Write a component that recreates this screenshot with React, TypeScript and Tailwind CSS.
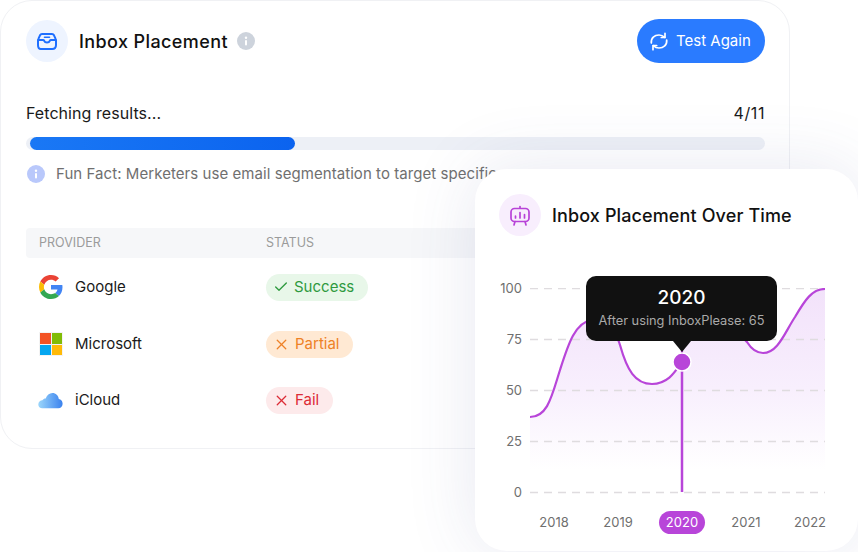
import { Check, X } from "lucide-react";

const providers = [
  { name: "Google", logo: <GoogleLogo />, status: "Success" },
  { name: "Microsoft", logo: <MicrosoftLogo />, status: "Partial" },
  { name: "iCloud", logo: <CloudLogo />, status: "Fail" },
];

const pillStyles: Record<string, string> = {
  Success: "gap-[6px] bg-[#e8f7e9] text-[#2f9a3f]",
  Partial: "gap-[7px] bg-[#ffe9d3] text-[#ee8126]",
  Fail: "gap-[7px] bg-[#fdeaeb] text-[#dc2b36]",
};

const yTicks = ["100", "75", "50", "25", "0"];
const years = ["2018", "2019", "2020", "2021", "2022"];

// the line jumps up behind the marker and the tooltip arrow, as in the design
const CURVE =
  "M1 129 C19 129 23 107 31 82 C39 57 46 34 63 32 C83 30 86 42 91 57 C98 82 106 96 123 96 C139 96 146 84 153 74 L153 32 C171 32 201 32 218 54 C223 62 228 65 234 65 C249 65 256 44 266 29 C276 12 283 1 296 1";

function GoogleLogo() {
  return (
    <svg viewBox="0 0 48 48" className="w-6 h-6">
      <path fill="#EA4335" d="M24 9.5c3.54 0 6.71 1.22 9.21 3.6l6.85-6.85C35.9 2.38 30.47 0 24 0 14.62 0 6.51 5.38 2.56 13.22l7.98 6.19C12.43 13.72 17.74 9.5 24 9.5z" />
      <path fill="#4285F4" d="M46.98 24.55c0-1.57-.15-3.09-.38-4.55H24v9.02h12.94c-.58 2.96-2.26 5.48-4.78 7.18l7.73 6c4.51-4.18 7.09-10.36 7.09-17.65z" />
      <path fill="#FBBC05" d="M10.53 28.59c-.48-1.45-.76-2.99-.76-4.59s.27-3.14.76-4.59l-7.98-6.19C.92 16.46 0 20.12 0 24c0 3.88.92 7.54 2.56 10.78l7.97-6.19z" />
      <path fill="#34A853" d="M24 48c6.48 0 11.93-2.13 15.89-5.81l-7.73-6c-2.15 1.45-4.92 2.3-8.16 2.3-6.26 0-11.57-4.22-13.47-9.91l-7.98 6.19C6.51 42.62 14.62 48 24 48z" />
    </svg>
  );
}

function MicrosoftLogo() {
  return (
    <div className="grid grid-cols-2 gap-[1px] w-6 h-6 p-[1px] bg-[#f3f3f3]">
      <div className="bg-[#f35325]" />
      <div className="bg-[#81bc06]" />
      <div className="bg-[#05a6f0]" />
      <div className="bg-[#ffba08]" />
    </div>
  );
}

function CloudLogo() {
  return (
    <svg viewBox="0 0 26 17" className="w-[26px] h-[17px] -ml-[1px]">
      <defs>
        <linearGradient id="cloud" x1="0" y1="0" x2="1" y2="0">
          <stop offset="0" stopColor="#9bd6fb" />
          <stop offset="1" stopColor="#3b82ee" />
        </linearGradient>
      </defs>
      <path
        fill="url(#cloud)"
        d="M4.500 16.500C2 16.500.3 14.800.3 12.600c0-2.500 2-4.300 4.300-4.400C5.500 6.800 6.800 6.300 8 6.400 9.200 3 11.800.8 15 .8c3.500 0 6.200 2.500 6.600 6.100 2.400.3 4 2.400 4 4.900 0 2.700-1.900 4.700-4.500 4.700H4.500z"
      />
    </svg>
  );
}

function InfoDot({ className }: { className: string }) {
  return (
    <span className={`flex items-center justify-center w-[18px] h-[18px] rounded-full text-white ${className}`}>
      <svg viewBox="0 0 18 18" className="w-[18px] h-[18px]">
        <rect x="8" y="8" width="2" height="5.500" rx="1" fill="currentColor" />
        <circle cx="9" cy="5.800" r="1.200" fill="currentColor" />
      </svg>
    </span>
  );
}

function InboxIcon() {
  return (
    <svg viewBox="0 0 20 17" className="w-5 h-[17px]" fill="none" stroke="#1f6fff" strokeWidth="2" strokeLinejoin="round" strokeLinecap="round">
      <path d="M5 1h10c1 0 1.600.5 2 1.300l1.500 3.300c.3.600.5 1.200.5 1.900V12c0 2.300-1.500 4-3.800 4H3.800C1.500 16 1 14.300 1 12V7.500c0-.7.200-1.300.5-1.900L3 2.300C3.400 1.500 4 1 5 1z" />
      <path d="M1.500 7H6c.6 0 1 .3 1.200.8.400 1 1.300 1.700 2.800 1.700s2.400-.7 2.800-1.700c.2-.5.600-.8 1.200-.8h4.500" />
      <path d="M7.500 4.200h5" strokeWidth="1.600" />
    </svg>
  );
}

function BoardIcon() {
  return (
    <svg viewBox="0 0 20 21" className="w-5 h-[21px]" fill="none" stroke="#b843d8" strokeWidth="1.700" strokeLinecap="round" strokeLinejoin="round">
      <path d="M10 1.500v1.500" />
      <rect x="1" y="3.500" width="18" height="13" rx="3.500" />
      <path d="M5.500 11v2M10 7.500V13M14.500 9.500V13" />
      <path d="M5 16.500 4 20M15 16.500l1 3.500" />
    </svg>
  );
}

function RefreshIcon() {
  return (
    <svg viewBox="0 0 18 19" className="w-[18px] h-[19px]" fill="none" stroke="currentColor" strokeWidth="1.700" strokeLinecap="round" strokeLinejoin="round">
      <path d="M1.300 11C.8 6 4.500 3 9 3c2.200 0 4 .8 5.700 2.400" />
      <path d="M15 1.300v4.200h-3.700" />
      <path d="M16.700 8c.5 5-3.200 8-7.700 8-2.200 0-4-.8-5.700-2.400" />
      <path d="M3 17.700v-4.200h3.700" />
    </svg>
  );
}

function StatusPill({ status }: { status: string }) {
  return (
    <div className={`inline-flex items-center h-[27px] pl-2 pr-[14px] rounded-full text-[15px] ${pillStyles[status]}`}>
      <span className="flex items-center justify-center w-[14px]">
        {status === "Success" ? (
          <Check className="w-4 h-4 shrink-0" strokeWidth={2} />
        ) : (
          <X className="w-[17px] h-[17px] shrink-0" strokeWidth={1.800} />
        )}
      </span>
      {status}
    </div>
  );
}

function PlacementCard() {
  return (
    <div className="w-[790px] h-[449px] rounded-[32px] border border-[#f0f1f4] bg-white pl-[25px] pr-[24px] pt-[18px] overflow-hidden">
      <div className="flex items-center justify-between">
        <div className="flex items-center">
          <div className="flex items-center justify-center w-[42px] h-[42px] rounded-full bg-[#eef4ff]">
            <InboxIcon />
          </div>
          <h2 className="ml-[11px] text-[18px] tracking-[0.4px] font-medium text-[#111]">Inbox Placement</h2>
          <InfoDot className="ml-[9px] bg-[#cdd3dc]" />
        </div>
        <button className="flex items-center gap-2 h-[44px] w-[128px] pl-[13px] rounded-full bg-[#2a7bff] text-white text-[15px]">
          <RefreshIcon />
          Test Again
        </button>
      </div>

      <div className="flex items-center justify-between mt-[38px] text-[16px] leading-6 text-[#1a1a1a]">
        <span className="tracking-[0.06px]">Fetching results...</span>
        <span className="tracking-[0.6px]">4/11</span>
      </div>
      <div className="mt-[12px] h-[13px] rounded-full bg-[#edf0f6] pl-1">
        <div className="h-[13px] w-[265px] rounded-full bg-gradient-to-r from-[#1a78f5] to-[#0b63ef]" />
      </div>
      <div className="flex items-center mt-[14px] ml-[1px] text-[15px] leading-5 text-[#6f6f6f] whitespace-nowrap">
        <InfoDot className="bg-[#b9c8fb]" />
        <span className="ml-[11px] tracking-[0.06px]">Fun Fact: Merketers use email segmentation to target specific</span>
      </div>

      <div className="flex items-center mt-[44px] h-[30px] pl-[13px] rounded bg-[#f6f7f9] text-[12.500px] text-[#9b9b9b]">
        <span className="w-[227px]">PROVIDER</span>
        <span>STATUS</span>
      </div>
      <div className="mt-[1px]">
        {providers.map((p) => (
          <div key={p.name} className="flex items-center h-[56.700px] pl-[13px]">
            <div className="flex items-center w-[227px]">
              <div className="flex items-center w-6 h-6">{p.logo}</div>
              <span className="ml-3 text-[15px] text-[#1a1a1a]">{p.name}</span>
            </div>
            <StatusPill status={p.status} />
          </div>
        ))}
      </div>
    </div>
  );
}

function TrendCard() {
  return (
    <div className="absolute left-[475px] top-[169px] w-[383px] h-[382px] rounded-[32px] bg-white pl-6 pt-[25px] shadow-[0_0_70px_rgba(70,80,150,0.13)]">
      <div className="flex items-center">
        <div className="flex items-center justify-center w-[42px] h-[42px] rounded-full bg-[#f8eefd]">
          <BoardIcon />
        </div>
        <h2 className="ml-[11px] text-[18px] tracking-[0.12px] font-medium text-[#111]">Inbox Placement Over Time</h2>
      </div>

      <div className="relative flex mt-[52px]">
        <div className="flex flex-col w-[23px] items-end -mt-[25px] text-[13px] text-[#6f6f6f]">
          {yTicks.map((t) => (
            <div key={t} className="flex items-center h-[51px] leading-none">
              {t}
            </div>
          ))}
        </div>
        <svg viewBox="0 0 296 223" className="w-[296px] h-[223px] ml-[7px]">
          <defs>
            <linearGradient id="area" x1="0" y1="0" x2="0" y2="1">
              <stop offset="0" stopColor="#f2e2fa" />
              <stop offset="0.55" stopColor="#f8effd" />
              <stop offset="1" stopColor="#ffffff" />
            </linearGradient>
          </defs>
          <path d={`${CURVE} V182 H1 Z`} fill="url(#area)" />
          {[0, 1, 2, 3, 4].map((i) => (
            <path key={i} d={`M1 ${0.5 + i * 51}H296`} stroke="#dfdcdf" strokeWidth="1.500" strokeDasharray="8 6" />
          ))}
          <path d={CURVE} fill="none" stroke="#b845d9" strokeWidth="2.200" />
          <path d="M153 74V204" stroke="#b845d9" strokeWidth="2.500" />
          <circle cx="153" cy="74" r="9" fill="#b845d9" stroke="#fff" strokeWidth="1.500" />
        </svg>

        <div className="absolute left-[87px] -top-[12px] w-[191px] h-[65px] rounded-[10px] bg-[#111] text-center pt-[9px]">
          <div className="text-[19px] leading-[26px] font-medium text-white">2020</div>
          <div className="mt-[2px] text-[12.800px] leading-4 text-[#a9a9a9]">After using InboxPlease: 65</div>
          <div className="absolute left-1/2 -translate-x-1/2 -bottom-[11px] w-0 h-0 border-x-[9px] border-x-transparent border-t-[11px] border-t-[#111]" />
        </div>
      </div>

      <div className="flex ml-[23px] -mt-[7px] text-[13px] text-[#6f6f6f]">
        {years.map((y) => (
          <div key={y} className="flex justify-center w-16">
            <span className={`flex items-center justify-center h-[23px] rounded-full ${y === "2020" ? "w-[46px] bg-[#b845d9] text-white" : ""}`}>{y}</span>
          </div>
        ))}
      </div>
    </div>
  );
}

export default function App() {
  return (
    <div className="relative w-[858px] h-[552px] overflow-hidden bg-white font-['Inter',sans-serif]">
      <PlacementCard />
      <TrendCard />
    </div>
  );
}
